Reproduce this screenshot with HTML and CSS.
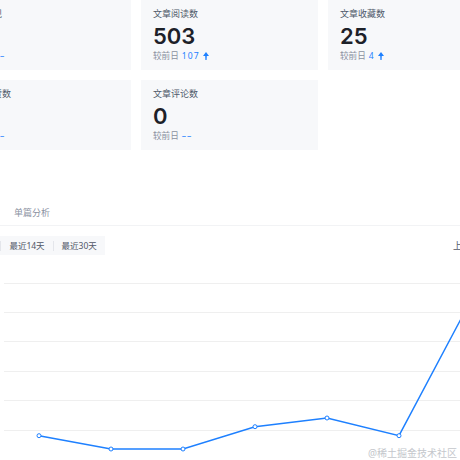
FILE: index.html
```html
<!DOCTYPE html>
<html lang="zh-CN">
<head>
    <meta charset="UTF-8">
    <meta name="viewport" content="width=device-width, initial-scale=1.0">
    <title>文章数据</title>
    <link rel="stylesheet" href="styles.css">
</head>
<body>
    <div class="page">
        <div class="stats">
            <div class="stat-card">
                <div class="stat-title">文章展现</div>
                <div class="stat-num">0</div>
                <div class="stat-foot">较前日 <span class="stat-diff">––</span></div>
            </div>
            <div class="stat-card">
                <div class="stat-title">文章阅读数</div>
                <div class="stat-num">503</div>
                <div class="stat-foot">较前日 <span class="stat-diff">107</span>
                    <svg class="up" width="6" height="8" viewBox="0 0 6 8"><path d="M3 0 L6 4 L3.8 4 L3.6 8 L2.4 8 L2.2 4 L0 4 Z" fill="#1e80ff"/></svg>
                </div>
            </div>
            <div class="stat-card">
                <div class="stat-title">文章收藏数</div>
                <div class="stat-num">25</div>
                <div class="stat-foot">较前日 <span class="stat-diff">4</span>
                    <svg class="up" width="6" height="8" viewBox="0 0 6 8"><path d="M3 0 L6 4 L3.8 4 L3.6 8 L2.4 8 L2.2 4 L0 4 Z" fill="#1e80ff"/></svg>
                </div>
            </div>
            <div class="stat-card">
                <div class="stat-title">文章点赞数</div>
                <div class="stat-num">0</div>
                <div class="stat-foot">较前日 <span class="stat-diff">––</span></div>
            </div>
            <div class="stat-card">
                <div class="stat-title">文章评论数</div>
                <div class="stat-num">0</div>
                <div class="stat-foot">较前日 <span class="stat-diff">––</span></div>
            </div>
        </div>

        <div class="tabs">
            <span class="tab">单篇分析</span>
        </div>

        <div class="toolbar">
            <div class="range">
                <span class="range-btn">最近7天</span>
                <span class="range-btn">最近14天</span>
                <span class="range-btn">最近30天</span>
            </div>
            <span class="toolbar-link">上一篇</span>
        </div>

        <div class="chart">
            <svg width="460" height="190" viewBox="0 0 460 190">
                <g stroke="#efefef" stroke-width="1">
                    <line x1="4" y1="14.5" x2="460" y2="14.5"/>
                    <line x1="4" y1="43.5" x2="460" y2="43.5"/>
                    <line x1="4" y1="72.5" x2="460" y2="72.5"/>
                    <line x1="4" y1="102.5" x2="460" y2="102.5"/>
                    <line x1="4" y1="131.5" x2="460" y2="131.5"/>
                    <line x1="4" y1="161.5" x2="460" y2="161.5"/>
                </g>
                <polyline points="39,166.7 111,180 183,180 255,157.7 327,149 399,166.7 471,31" fill="none" stroke="#1e80ff" stroke-width="1.5"/>
                <g fill="#fff" stroke="#1e80ff" stroke-width="1">
                    <circle cx="39" cy="166.7" r="2"/>
                    <circle cx="111" cy="180" r="2"/>
                    <circle cx="183" cy="180" r="2"/>
                    <circle cx="255" cy="157.7" r="2"/>
                    <circle cx="327" cy="149" r="2"/>
                    <circle cx="399" cy="166.7" r="2"/>
                </g>
            </svg>
            <div class="watermark">@稀土掘金技术社区</div>
        </div>
    </div>
</body>
</html>
```

FILE: styles.css
```css
* { margin: 0; padding: 0; box-sizing: border-box; }
body { font-family: "Noto Sans", "Noto Sans CJK SC", sans-serif; background: #fff; overflow: hidden; }
.page { width: 460px; height: 460px; overflow: hidden; }

.stats { display: grid; grid-template-columns: repeat(3, 177px); gap: 10px; margin-left: -46px; }
.stat-card { background: #f7f8fa; height: 70px; padding: 8px 12px; }
.stat-title { font-size: 9px; line-height: 12px; color: #4e5969; }
.stat-num { font-family: Inter, "Noto Sans", sans-serif; font-size: 22px; line-height: 26px; font-weight: 600; color: #1d2129; margin-top: 3px; }
.stat-foot { font-size: 8.6px; line-height: 12px; color: #8a919f; margin-top: 1px; display: flex; align-items: center; }
.stat-diff { color: #1e80ff; margin-left: 3px; letter-spacing: 1px; }
.up { margin-left: 3px; }

.tabs { margin-top: 56px; padding-left: 14px; height: 20px; font-size: 9px; line-height: 14px; border-bottom: 1px solid #f2f3f5; }
.tab { color: #8a919f; }

.toolbar { display: flex; justify-content: space-between; align-items: center; margin-top: 10px; }
.range { display: flex; align-items: center; background: #f7f8fa; height: 19px; margin-left: -46px; }
.range-btn { font-size: 8.5px; color: #515767; padding: 0 8px; border-left: 1px solid #e4e6eb; line-height: 10px; }
.range-btn:first-child { border-left: none; }
.toolbar-link { font-size: 9px; color: #515767; margin-right: -20px; }

.chart { position: relative; margin-top: 14px; }
.chart svg { display: block; }
.watermark { position: absolute; right: 3px; top: 176px; font-size: 10px; color: #c4c7cc; }
```
